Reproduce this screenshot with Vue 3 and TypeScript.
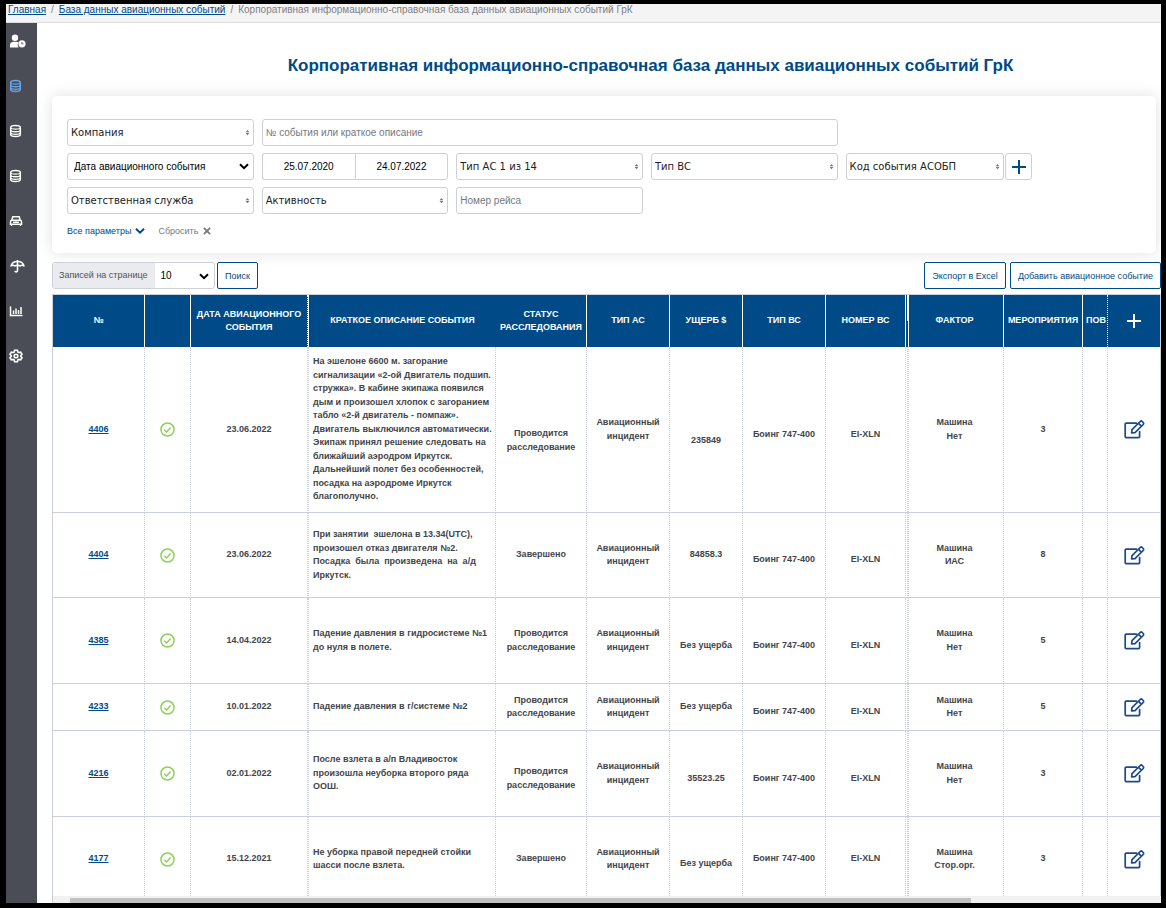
<script setup lang="ts">
import { ref } from 'vue'

interface EventRow {
  id: string
  date: string
  text: string
  status: string[]
  statusPlace?: string
  damage: string
  damagePlace?: string
  planePlace?: string
  factor: string[]
  actions: string
  size: string
}

const nav = ['users', 'db', 'db', 'db', 'car', 'umbrella', 'chart', 'gear']
const navLabels = ['Пользователи', 'База событий', 'База 2', 'База 3', 'Транспорт', 'Страхование', 'Отчёты', 'Настройки']

const search = ref('')
const flight = ref('')
const dateFrom = ref('25.07.2020')
const dateTo = ref('24.07.2022')

const progress = ['Проводится', 'расследование']

const rows: EventRow[] = [
  {
    id: '4406',
    date: '23.06.2022',
    text: 'На эшелоне 6600 м. загорание\nсигнализации «2-ой Двигатель подшип.\nстружка». В кабине экипажа появился\nдым и произошел хлопок с загоранием\nтабло «2-й двигатель - помпаж».\nДвигатель выключился автоматически.\nЭкипаж принял решение следовать на\nближайший аэродром Иркутск.\nДальнейший полет без особенностей,\nпосадка на аэродроме Иркутск\nблагополучно.',
    status: progress,
    statusPlace: 'lower',
    damage: '235849',
    damagePlace: 'lower',
    planePlace: 'low',
    factor: ['Машина', 'Нет'],
    actions: '3',
    size: 'huge',
  },
  {
    id: '4404',
    date: '23.06.2022',
    text: 'При занятии  эшелона в 13.34(UTC),\nпроизошел отказ двигателя №2.\nПосадка  была  произведена  на  а/д\nИркутск.',
    status: ['Завершено'],
    damage: '84858.3',
    planePlace: 'low',
    factor: ['Машина', 'ИАС'],
    actions: '8',
    size: 'medium',
  },
  {
    id: '4385',
    date: '14.04.2022',
    text: 'Падение давления в гидросистеме №1\nдо нуля в полете.',
    status: progress,
    damage: 'Без ущерба',
    damagePlace: 'low',
    planePlace: 'low',
    factor: ['Машина', 'Нет'],
    actions: '5',
    size: 'tall',
  },
  {
    id: '4233',
    date: '10.01.2022',
    text: 'Падение давления в г/системе №2',
    status: progress,
    damage: 'Без ущерба',
    planePlace: 'low',
    factor: ['Машина', 'Нет'],
    actions: '5',
    size: 'short',
  },
  {
    id: '4216',
    date: '02.01.2022',
    text: 'После взлета в а/п Владивосток\nпроизошла неуборка второго ряда\nООШ.',
    status: progress,
    statusPlace: 'low',
    damage: '35523.25',
    damagePlace: 'low',
    planePlace: 'low',
    factor: ['Машина', 'Нет'],
    actions: '3',
    size: 'tall',
  },
  {
    id: '4177',
    date: '15.12.2021',
    text: 'Не уборка правой передней стойки\nшасси после взлета.',
    status: ['Завершено'],
    damage: 'Без ущерба',
    damagePlace: 'low',
    factor: ['Машина', 'Стор.орг.'],
    actions: '3',
    size: 'medium',
  },
]

const columns = [92, 46, 117, 188, 91, 83, 73, 83, 80, 98, 79, 25, 53]
</script>

<template>
  <div class="page">
    <nav class="crumbs" aria-label="Путь">
      <a href="#">Главная</a><span class="sep">/</span><a href="#">База данных авиационных событий</a><span class="sep">/</span><span>Корпоративная информационно-справочная база данных авиационных событий ГрК</span>
    </nav>
    <div class="body">
      <aside class="side">
        <a v-for="(icon, i) in nav" :key="i" href="#" :class="['side-link', { active: i === 1 }]" :aria-label="navLabels[i]">
          <svg v-if="icon === 'users'" class="wide" viewBox="0 0 17 14" fill="currentColor">
            <circle cx="6" cy="3.8" r="3.2" />
            <path d="M1 13.500V11c0-2 1.500-3.300 3.300-3.300h3.200c.8 0 1.400.2 2 .6A4.500 4.500 0 0 0 9.600 13.500z" />
            <path fill-rule="evenodd" d="M13 6.200a3.600 3.600 0 1 0 0 7.200 3.600 3.600 0 0 0 0-7.200zM12.500 8v2.200h2v-.8h-1.200V8z" />
          </svg>
          <svg v-else-if="icon === 'db'" viewBox="0 0 14 14" fill="none" stroke="currentColor">
            <path stroke-width="1.500" d="M1.700 3.500c0-1.300 2-2 4.800-2s4.800.7 4.800 2v7c0 1.300-2 2-4.800 2s-4.800-.7-4.800-2z" />
            <path stroke-width="1.300" d="M1.700 4c1 1.500 8.600 1.500 9.600 0M1.700 6.600c1 1.500 8.600 1.500 9.600 0M1.700 9.200c1 1.500 8.600 1.500 9.600 0" />
          </svg>
          <svg v-else-if="icon === 'car'" viewBox="0 0 14 14" fill="none" stroke="currentColor" stroke-width="1.500">
            <path d="M2.800 6.200l1-3.400h6.400l1 3.400M1.500 10.300V7.800c0-1 .7-1.600 1.500-1.600h8c.8 0 1.500.6 1.500 1.600v2.500zM2.500 10.300v1.700M11.500 10.300v1.700M4 8.300h6" />
          </svg>
          <svg v-else-if="icon === 'umbrella'" class="wide" viewBox="0 0 16 14">
            <path fill="none" stroke="currentColor" stroke-width="1.500" stroke-linejoin="round" d="M1.500 7C2.200 3.800 4.600 2.400 8 2.400s5.800 1.400 6.500 4.600c-1.400-1-2.800-.9-4 0-.8-.9-4.200-.9-5 0-1.200-.9-2.600-1-4 0z" />
            <path fill="none" stroke="currentColor" stroke-width="1.600" d="M8 1v10.600c0 1.700-2.300 1.700-2.500.2" />
          </svg>
          <svg v-else-if="icon === 'chart'" viewBox="0 0 14 14" fill="none" stroke="currentColor" stroke-width="1.500">
            <path d="M1.500 2.500v9h12M4.500 10V6.500M7 10V4.500M9.500 10V6M12 10V3" />
          </svg>
          <svg v-else viewBox="0 0 14 14" fill="none" stroke="currentColor" stroke-width="1.600">
            <path d="M5.600 1.200h2.800l.4 1.700 1.200.7 1.700-.5 1.300 2.300L11.800 6.500v1l1.200 1.100-1.300 2.300-1.700-.5-1.200.7-.4 1.700H5.600l-.4-1.700-1.200-.7-1.700.5L1 8.600l1.200-1.100v-1L1 5.400l1.300-2.300 1.700.5 1.200-.7z" />
            <circle cx="7" cy="7" r="1.800" />
          </svg>
        </a>
      </aside>

      <main class="main">
        <h1>Корпоративная информационно-справочная база данных авиационных событий ГрК</h1>

        <form class="panel" @submit.prevent>
          <div class="fields">
            <div class="pick">
              <select aria-label="Компания"><option>Компания</option></select>
              <svg class="sort" viewBox="0 0 6 8"><path d="M3 0l2.500 3h-5zM3 7L.5 4h5z" /></svg>
            </div>
            <input v-model="search" class="span3" type="text" aria-label="Описание" placeholder="№ события или краткое описание" />
            <div class="pick plain row-start">
              <select aria-label="Вид даты"><option>Дата авиационного события</option></select>
              <svg class="chev" viewBox="0 0 10 7"><path d="M1 1.200l4 4 4-4" /></svg>
            </div>
            <div class="dates">
              <input v-model="dateFrom" type="text" aria-label="Дата с" />
              <input v-model="dateTo" type="text" aria-label="Дата по" />
            </div>
            <div class="pick">
              <select aria-label="Тип АС"><option>Тип АС 1 из 14</option></select>
              <svg class="sort" viewBox="0 0 6 8"><path d="M3 0l2.500 3h-5zM3 7L.5 4h5z" /></svg>
            </div>
            <div class="pick">
              <select aria-label="Тип ВС"><option>Тип ВС</option></select>
              <svg class="sort" viewBox="0 0 6 8"><path d="M3 0l2.500 3h-5zM3 7L.5 4h5z" /></svg>
            </div>
            <div class="code">
              <div class="pick">
                <select aria-label="Код события"><option>Код события АСОБП</option></select>
                <svg class="sort" viewBox="0 0 6 8"><path d="M3 0l2.500 3h-5zM3 7L.5 4h5z" /></svg>
              </div>
              <button type="button" class="add" aria-label="Добавить код">
                <svg viewBox="0 0 14 14"><path d="M7 0v14M0 7h14" /></svg>
              </button>
            </div>
            <div class="pick row-start">
              <select aria-label="Ответственная служба"><option>Ответственная служба</option></select>
              <svg class="sort" viewBox="0 0 6 8"><path d="M3 0l2.500 3h-5zM3 7L.5 4h5z" /></svg>
            </div>
            <div class="pick">
              <select aria-label="Активность"><option>Активность</option></select>
              <svg class="sort" viewBox="0 0 6 8"><path d="M3 0l2.500 3h-5zM3 7L.5 4h5z" /></svg>
            </div>
            <input v-model="flight" type="text" aria-label="Номер рейса" placeholder="Номер рейса" />
          </div>
          <div class="links">
            <button type="button" class="all">Все параметры
              <svg viewBox="0 0 10 7"><path d="M1 1.200l4 4 4-4" /></svg>
            </button>
            <button type="button" class="reset">Сбросить
              <svg viewBox="0 0 9 9"><path d="M1 1l7 7M8 1L1 8" /></svg>
            </button>
          </div>
        </form>

        <div class="tools">
          <div class="per-page">
            <label for="per-page">Записей на странице</label>
            <div class="pick plain">
              <select id="per-page"><option>10</option></select>
              <svg class="chev" viewBox="0 0 10 7"><path d="M1 1.200l4 4 4-4" /></svg>
            </div>
          </div>
          <button type="button" class="btn">Поиск</button>
          <span class="grow"></span>
          <button type="button" class="btn">Экспорт в Excel</button>
          <button type="button" class="btn">Добавить авиационное событие</button>
        </div>

        <div class="table-box">
          <table>
            <colgroup>
              <col v-for="(w, i) in columns" :key="i" :style="{ width: w + 'px' }" />
            </colgroup>
            <thead>
              <tr>
                <th>№</th>
                <th></th>
                <th class="dot">ДАТА АВИАЦИОННОГО СОБЫТИЯ</th>
                <th class="desc">КРАТКОЕ ОПИСАНИЕ СОБЫТИЯ</th>
                <th>СТАТУС РАССЛЕДОВАНИЯ</th>
                <th>ТИП АС</th>
                <th>УЩЕРБ $</th>
                <th>ТИП ВС</th>
                <th>НОМЕР ВС</th>
                <th class="factor">ФАКТОР</th>
                <th>МЕРОПРИЯТИЯ</th>
                <th class="repeat dot">ПОВ</th>
                <th>
                  <button type="button" class="plus" aria-label="Добавить">
                    <svg viewBox="0 0 14 14"><path d="M7 0v14M0 7h14" /></svg>
                  </button>
                </th>
              </tr>
            </thead>
            <tbody>
              <tr v-for="row in rows" :key="row.id" :class="row.size">
                <td><a href="#">{{ row.id }}</a></td>
                <td>
                  <svg class="ok" viewBox="0 0 16 16"><circle cx="8" cy="8" r="7" /><path d="M4.600 8.300l2.400 2.300 4.400-4.700" /></svg>
                </td>
                <td>{{ row.date }}</td>
                <td class="desc">{{ row.text }}</td>
                <td :class="row.statusPlace"><div v-for="s in row.status" :key="s">{{ s }}</div></td>
                <td><div>Авиационный</div><div>инцидент</div></td>
                <td :class="row.damagePlace">{{ row.damage }}</td>
                <td :class="row.planePlace">Боинг 747-400</td>
                <td :class="row.planePlace">EI-XLN</td>
                <td class="factor"><div v-for="f in row.factor" :key="f">{{ f }}</div></td>
                <td>{{ row.actions }}</td>
                <td></td>
                <td>
                  <button type="button" class="edit" aria-label="Изменить">
                    <svg viewBox="0 0 21 19"><path d="M12.500 3.200H2.200c-.6 0-1 .4-1 1v12.400c0 .6.4 1 1 1h12.400c.6 0 1-.4 1-1v-5" /><path d="M7.600 12.900l.4-3.300 8.200-8.100c.6-.6 1.400-.6 2 0l1 1c.6.6.6 1.400 0 2L11 12.600zM14.500 3.300l2.900 2.900" /></svg>
                  </button>
                </td>
              </tr>
            </tbody>
          </table>
        </div>
        <div class="scroll"><div class="thumb"></div></div>
      </main>
    </div>
  </div>
</template>

<style>
body {
  background: #000;
}
</style>

<style scoped>
* {
  box-sizing: border-box;
}
.page {
  height: 100vh;
  display: flex;
  flex-direction: column;
  border: solid #000;
  border-width: 4px 5px 5px 6px;
  background: #fff;
  color: #43454a;
  font-family: "Liberation Sans", Arial, sans-serif;
  font-size: 9px;
}
a {
  color: #004a87;
}
button,
input,
select {
  font: inherit;
  color: inherit;
  margin: 0;
}
.crumbs {
  height: 19px;
  flex: none;
  padding-left: 2px;
  background: #f4f4f5;
  border-bottom: 1px solid #dcdddf;
  font-size: 10px;
  line-height: 12px;
  color: #808085;
  white-space: nowrap;
}
.sep {
  margin: 0 5px;
}
.body {
  flex: 1;
  min-height: 0;
  display: flex;
}
.side {
  width: 31px;
  flex: none;
  background: #4a4d56;
  padding-top: 11px;
  display: flex;
  flex-direction: column;
  gap: 31px;
}
.side-link {
  height: 14px;
  padding-left: 3px;
  color: #fff;
}
.side-link.active {
  color: #65a5ec;
}
.side-link svg {
  display: block;
  height: 14px;
  width: 14px;
}
.side-link svg.wide {
  width: 17px;
}
.main {
  flex: 1;
  min-width: 0;
  display: flex;
  flex-direction: column;
  padding-left: 15px;
}
h1 {
  margin: 33px 0 20px;
  padding-left: 88px;
  font-size: 17px;
  line-height: 20px;
  text-align: center;
  color: #004a87;
}
.panel {
  margin-right: 5px;
  padding: 23px 15px 15px;
  border-radius: 5px;
  background: #fff;
  box-shadow: 0 0 15px rgba(0, 0, 0, 0.12);
}
.fields {
  display: grid;
  grid-template-columns: repeat(5, minmax(0, 187fr)) 101fr;
  gap: 7px 8px;
}
.span3 {
  grid-column: span 3;
}
.row-start {
  grid-column-start: 1;
}
.pick {
  position: relative;
  min-width: 0;
}
select,
input {
  display: block;
  width: 100%;
  height: 27px;
  border: 1px solid #ced0d8;
  border-radius: 3px;
  background: #fff;
  appearance: none;
  outline: none;
}
select {
  padding: 0 3px;
  font-family: "DejaVu Sans", Verdana, sans-serif;
  font-size: 10px;
  color: #222;
}
.plain select {
  padding: 0 6px;
  font-family: "Liberation Sans", Arial, sans-serif;
  color: #000;
}
input {
  padding: 0 3px;
  font-size: 10px;
  color: #000;
}
input::placeholder {
  color: #75787d;
  opacity: 1;
}
.pick svg {
  position: absolute;
  pointer-events: none;
}
.sort {
  right: 4px;
  top: 11px;
  width: 5px;
  height: 6px;
  fill: #777;
}
.chev {
  right: 5px;
  top: 10px;
  width: 10px;
  height: 7px;
  fill: none;
  stroke: #000;
  stroke-width: 2;
}
.dates {
  display: flex;
}
.dates input {
  text-align: center;
}
.dates input:first-child {
  border-radius: 3px 0 0 3px;
  border-right: 0;
}
.dates input:last-child {
  border-radius: 0 3px 3px 0;
}
.code {
  display: flex;
  gap: 1px;
}
.code .pick {
  flex: 1;
}
.add {
  width: 27px;
  height: 27px;
  flex: none;
  padding: 0;
  display: grid;
  place-items: center;
  border: 1px solid #ced0d8;
  border-radius: 3px;
  background: #fff;
}
.add svg,
.plus svg {
  width: 14px;
  height: 14px;
  display: block;
  fill: none;
  stroke: #004a87;
  stroke-width: 2;
}
.links {
  display: flex;
  gap: 13px;
  margin-top: 9px;
}
.links button {
  display: flex;
  align-items: center;
  gap: 4px;
  height: 15px;
  padding: 0;
  border: 0;
  background: none;
}
.links svg {
  width: 10px;
  height: 8px;
  fill: none;
  stroke: currentColor;
  stroke-width: 2;
}
.links .all {
  color: #004a87;
}
.links .reset {
  color: #7a7a7a;
}
.tools {
  display: flex;
  gap: 4px;
  margin: 9px 0 5px;
}
.per-page {
  display: flex;
  width: 163px;
  height: 27px;
  margin-right: -2px;
  border: 1px solid #ced0d8;
  border-radius: 3px;
  overflow: hidden;
}
.per-page label {
  padding: 0 7px 0 6px;
  line-height: 24px;
  background: #e9ebee;
  color: #50555c;
  white-space: nowrap;
}
.per-page .pick {
  flex: 1;
}
.per-page select {
  height: 25px;
  border: 0;
}
.grow {
  flex: 1;
}
.btn {
  height: 27px;
  padding: 0 7px;
  border: 1px solid #004a87;
  border-radius: 2px;
  background: #fff;
  color: #004a87;
  white-space: nowrap;
}
.table-box {
  flex: 1;
  min-height: 0;
  overflow: hidden;
  border-left: 1px solid #ccd0da;
  border-top: 1px solid #ccd0da;
}
table {
  width: 100%;
  table-layout: fixed;
  border-spacing: 0;
  font-weight: bold;
  line-height: 1.5;
}
th,
td {
  padding: 0 2px;
  text-align: center;
  vertical-align: middle;
}
th {
  height: 52px;
  background-color: #004a87;
  color: #fff;
  border-right: 1px solid #fff;
}
th.dot {
  border-right-style: dotted;
}
th.desc {
  border-right: 0;
  border-left: 1px solid #fff;
}
th.factor {
  background-image: linear-gradient(#fff, #fff), linear-gradient(#fff, #fff);
  background-size: 1px 100%, 1px 50%;
  background-position: 2px 0, 1px 0;
  background-repeat: no-repeat;
}
th.repeat {
  padding: 0 0 0 3px;
  text-align: left;
  white-space: nowrap;
}
th:last-child,
td:last-child {
  border-right: 1px solid #ccd0da;
}
td {
  border-right: 1px dotted #ccd0da;
  border-bottom: 1px solid #ccd0da;
}
td.desc {
  border-left: 1px dotted #ccd0da;
  padding: 0 0 0 4px;
  text-align: left;
  white-space: pre;
}
td.factor {
  background: repeating-linear-gradient(#ccd0da 0 1px, #fff 1px 2px) 1px 0 / 2px 100% no-repeat;
}
.huge td {
  height: 166px;
}
.tall td {
  height: 86px;
}
.medium td {
  height: 85px;
}
.short td {
  height: 47px;
}
td.low {
  padding-top: 10px;
}
td.lower {
  padding-top: 22px;
}
.ok {
  display: block;
  width: 15px;
  height: 15px;
  margin: 0 auto;
  fill: none;
  stroke: #8fd05c;
  stroke-width: 1.6;
}
.plus,
.edit {
  display: block;
  margin: 0 auto;
  padding: 0;
  border: 0;
  background: none;
}
.plus svg {
  stroke: #fff;
}
.edit svg {
  display: block;
  width: 21px;
  height: 19px;
  fill: none;
  stroke: #1d4a86;
  stroke-width: 1.7;
  stroke-linejoin: round;
  stroke-linecap: round;
}
.scroll {
  flex: none;
  height: 7px;
  padding: 2px 190px 0 17px;
  background: #f1f1f1;
  border-left: 1px solid #ccd0da;
}
.thumb {
  height: 5px;
  background: #c1c1c1;
}
</style>
